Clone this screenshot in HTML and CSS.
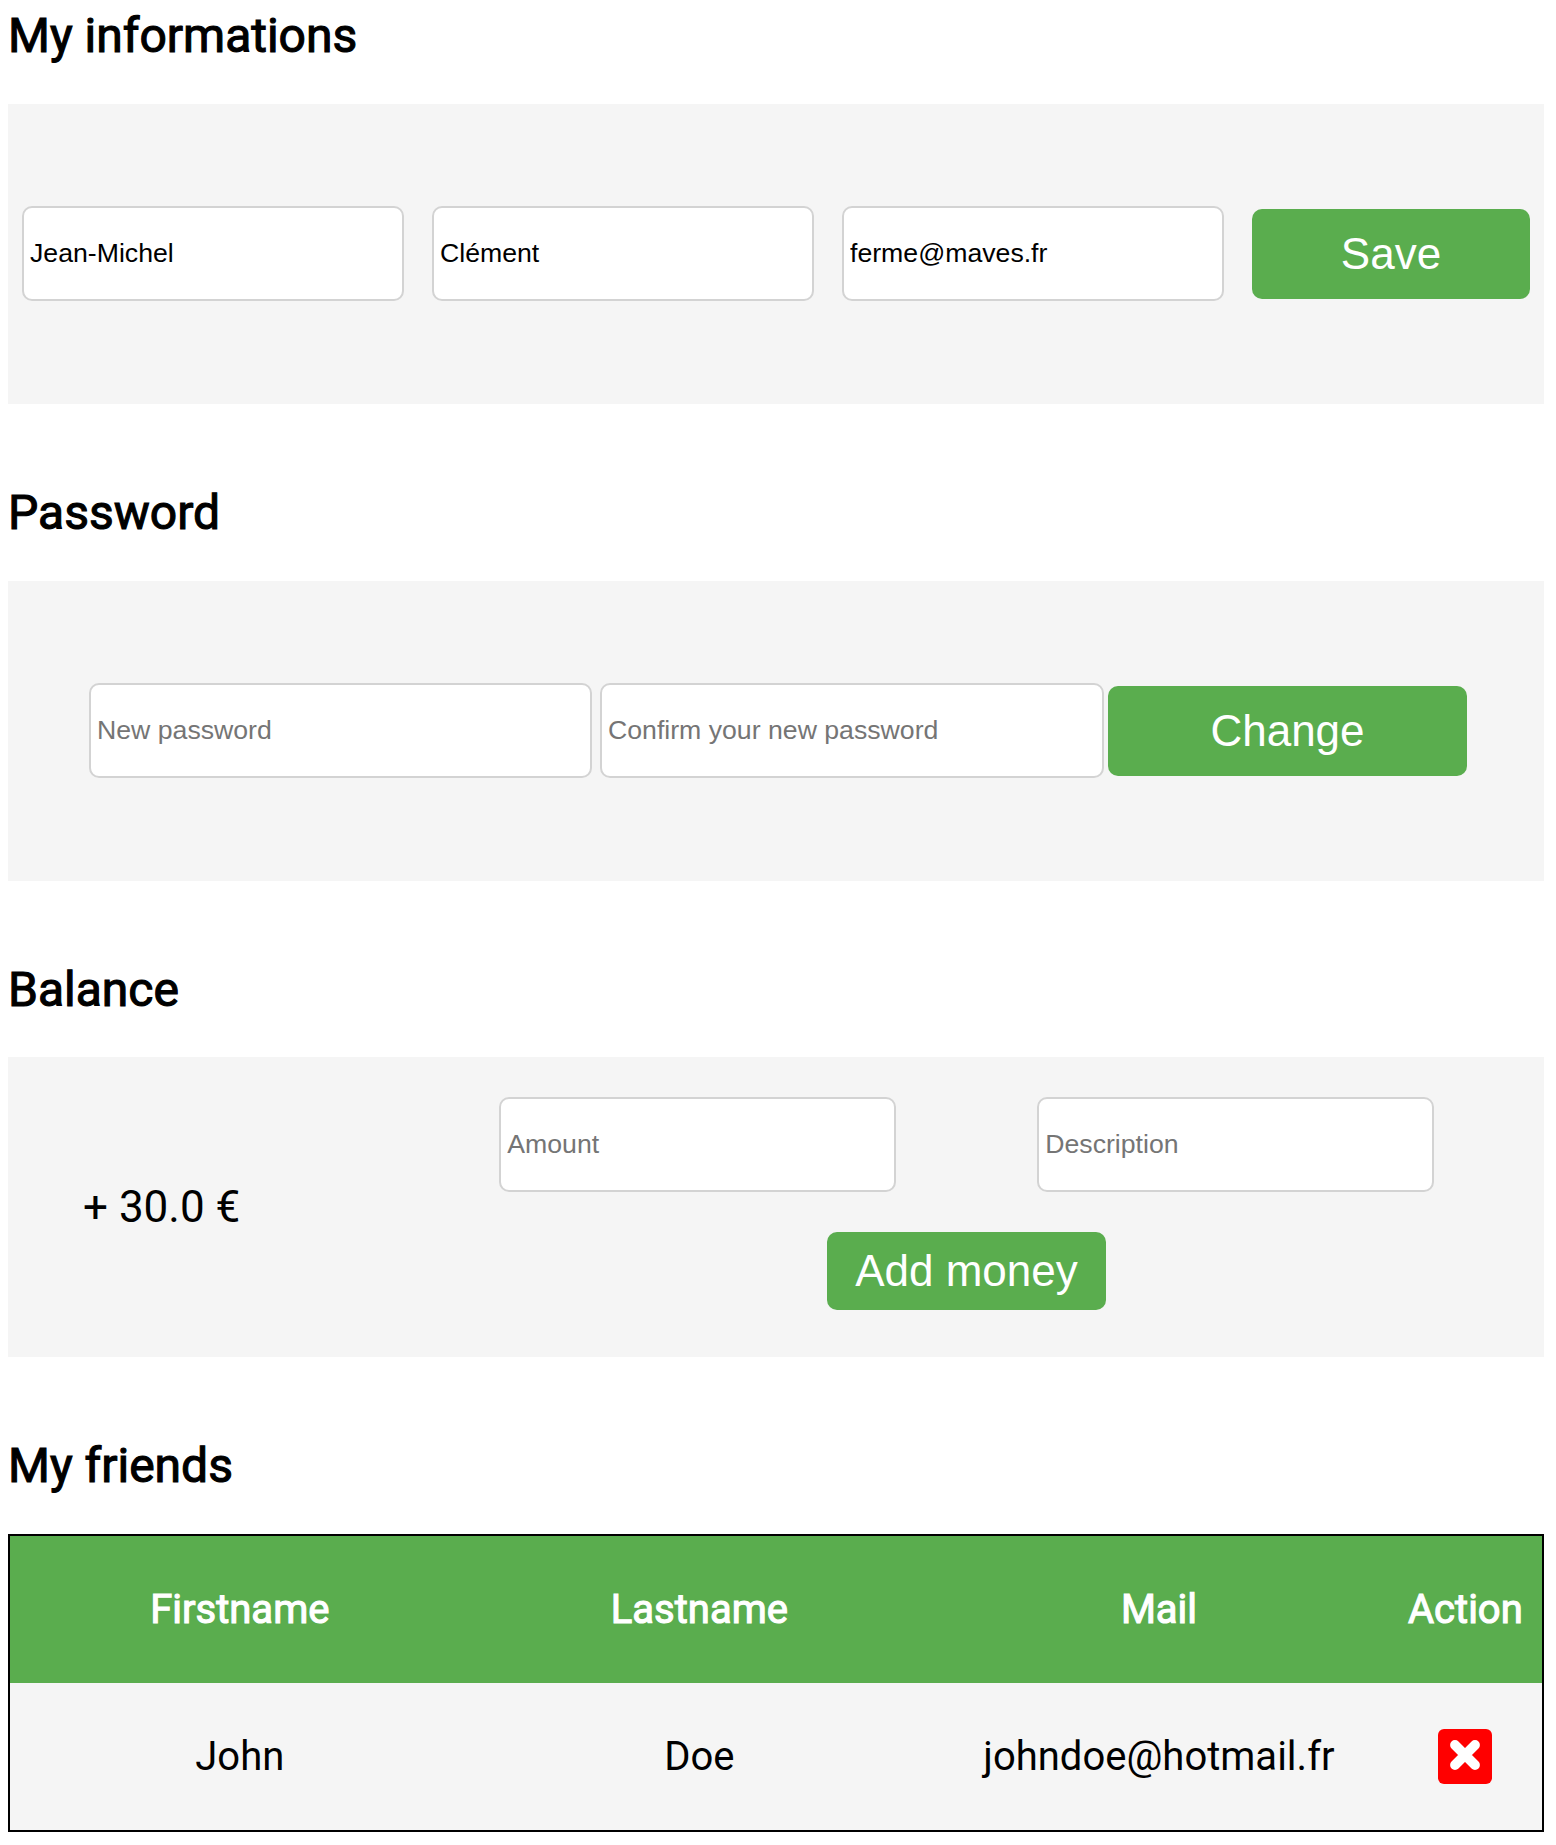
FILE: index.html
```html
<!DOCTYPE html>
<html lang="en">
<head>
  <meta charset="utf-8">
  <title>My account</title>
  <link rel="stylesheet" href="styles.css">
</head>
<body>
  <section class="section">
    <h2 class="title">My informations</h2>
    <form class="panel panel-infos">
      <input class="field field-info" type="text" value="Jean-Michel">
      <input class="field field-info" type="text" value="Clément">
      <input class="field field-info" type="text" value="ferme@maves.fr">
      <button class="button button-save" type="button">Save</button>
    </form>
  </section>

  <section class="section">
    <h2 class="title">Password</h2>
    <form class="panel panel-password">
      <input class="field field-password" type="password" placeholder="New password">
      <input class="field field-password field-confirm" type="password" placeholder="Confirm your new password">
      <button class="button button-change" type="button">Change</button>
    </form>
  </section>

  <section class="section">
    <h2 class="title title-balance">Balance</h2>
    <div class="panel panel-balance">
      <p class="amount">+ 30.0 €</p>
      <form class="money">
        <div class="money-fields">
          <input class="field field-money" type="text" placeholder="Amount">
          <input class="field field-money" type="text" placeholder="Description">
        </div>
        <button class="button button-add" type="button">Add money</button>
      </form>
    </div>
  </section>

  <section class="section">
    <h2 class="title">My friends</h2>
    <table class="friends">
      <thead>
        <tr class="head-row">
          <th class="cell head">Firstname</th>
          <th class="cell head">Lastname</th>
          <th class="cell head">Mail</th>
          <th class="cell head cell-action">Action</th>
        </tr>
      </thead>
      <tbody>
        <tr class="friend-row">
          <td class="cell">John</td>
          <td class="cell">Doe</td>
          <td class="cell">johndoe@hotmail.fr</td>
          <td class="cell cell-action">
            <button class="delete" type="button" aria-label="Delete">
              <svg class="cross" viewBox="0 0 30 30" width="30" height="30">
                <path d="M5 5L25 25M25 5L5 25" stroke="#fff" stroke-width="9.8" stroke-linecap="round"/>
              </svg>
            </button>
          </td>
        </tr>
      </tbody>
    </table>
  </section>
</body>
</html>
```
FILE: styles.css
```css
* {
  box-sizing: border-box;
}

body {
  margin: 8px 12px 0 8px;
  background: #fff;
  color: #000;
  font-family: Roboto, "Liberation Sans", sans-serif;
}

.section {
  margin-bottom: 80.67px;
}

.section:last-child {
  margin-bottom: 0;
}

.title {
  margin: 0 0 40px;
  font-size: 48px;
  font-weight: 400;
  line-height: 56px;
  -webkit-text-stroke: 1.1px currentColor;
}

.title-balance {
  margin-bottom: 39.33px;
  padding-top: 0.67px;
}

.panel {
  display: flex;
  align-items: center;
  height: 300px;
  background: #f5f5f5;
}

.field {
  height: 95px;
  margin: 0;
  padding: 0 6px;
  border: 2px solid #d3d3d3;
  border-radius: 10px;
  background: #fff;
  color: #000;
  font-family: "Liberation Sans", Arial, sans-serif;
  font-size: 26.67px;
}

.field::placeholder {
  color: #757575;
}

.button {
  height: 90px;
  padding: 0;
  border: 0;
  border-radius: 10px;
  background: #5aad4e;
  color: #fff;
  font-family: "Liberation Sans", Arial, sans-serif;
  font-size: 44px;
}

.panel-infos {
  justify-content: space-around;
}

.field-info {
  width: 382px;
  margin-bottom: 1px;
}

.button-save {
  width: 278px;
}

.panel-password {
  padding-left: 81px;
}

.field-password {
  width: 503px;
  margin-right: 8px;
}

.field-confirm {
  width: 504px;
  margin-right: 4px;
}

.button-change {
  width: 359px;
}

.amount {
  width: 382px;
  margin: 0;
  padding-left: 75px;
  font-size: 44px;
}

.money {
  display: flex;
  flex-direction: column;
  align-items: center;
  gap: 40px;
  width: 1153px;
  padding-bottom: 7px;
}

.money-fields {
  display: flex;
  justify-content: center;
  gap: 141.5px;
}

.field-money {
  width: 396.5px;
}

.button-add {
  width: 279px;
  height: 78px;
}

.friends {
  width: 1536px;
  border: 2px solid #000;
  border-spacing: 0;
  table-layout: fixed;
  background: #f5f5f5;
}

.cell {
  width: 30%;
  height: 147px;
  padding: 0;
  font-size: 40px;
  text-align: center;
  vertical-align: middle;
}

.cell-action {
  width: 10%;
}

.head {
  background: #5aad4e;
  color: #fff;
  font-weight: 400;
  -webkit-text-stroke: 1.1px currentColor;
}

.delete {
  display: flex;
  align-items: center;
  justify-content: center;
  width: 54px;
  height: 55px;
  margin: 0 auto;
  padding: 0 0 3px;
  border: 0;
  border-radius: 6px;
  background: #f00;
}

.cross {
  display: block;
}
```
